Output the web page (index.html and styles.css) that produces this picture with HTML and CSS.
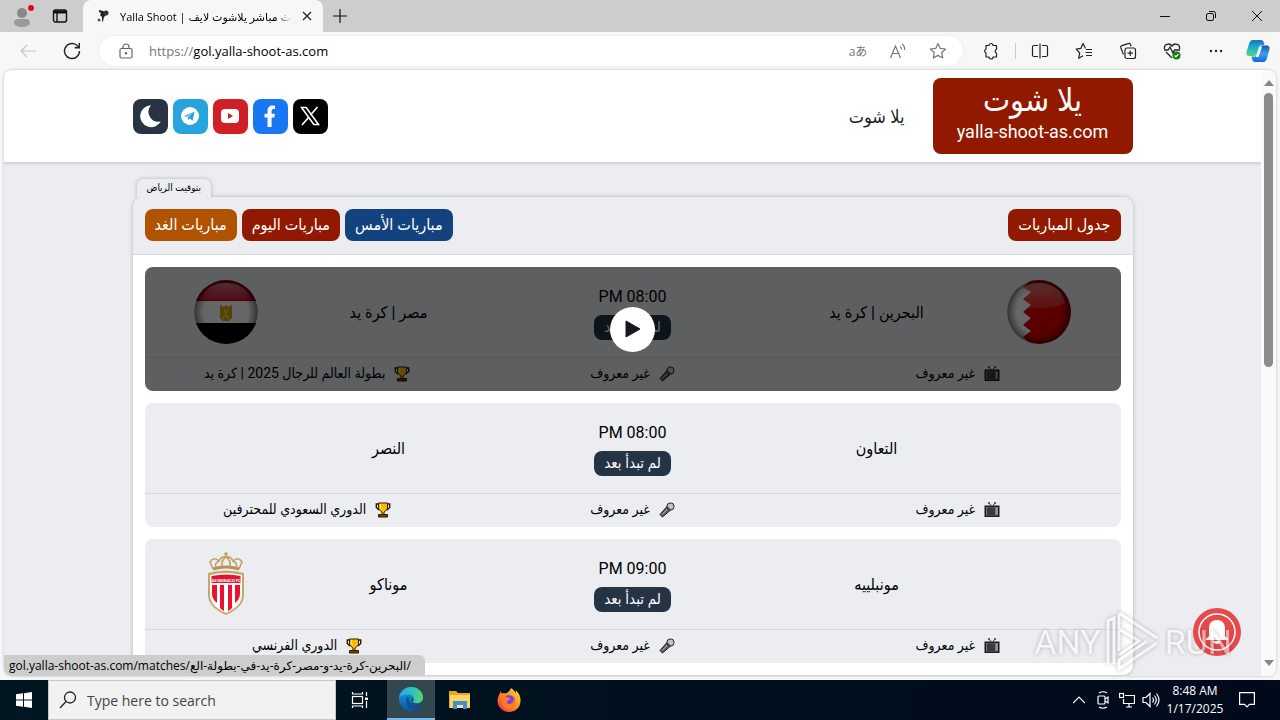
FILE: index.html
```
<!DOCTYPE html>
<html lang="ar">
<head>
    <meta charset="UTF-8">
    <meta name="viewport" content="width=device-width, initial-scale=1.0">
    <title>Yalla Shoot | بث مباشر يلاشوت لايف</title>
    <link rel="stylesheet" href="styles.css">
</head>
<body>
    <!-- Shared icons -->
    <svg class="sprite" aria-hidden="true">
        <symbol id="tv" viewBox="0 0 16 16">
            <path d="M4.500.5L7 3.500M11.500.5L9 3.500M4 1h2M10 1h2" stroke="#222" fill="none"/>
            <rect x=".5" y="3.500" width="15" height="11.500" fill="#1c1c1c"/>
            <rect x="2" y="5" width="12" height="8.500" fill="#777"/>
            <rect x="3" y="5.500" width="8" height="7.500" fill="#3a3a3a"/>
            <path d="M12 7h1.500M12 9h1.500M12 11h1.500" stroke="#ccc"/>
        </symbol>
        <symbol id="mic" viewBox="0 0 16 16">
            <path d="M8 4.500L1 12.500l2.500 2.500L11.500 8z" fill="#666" stroke="#111"/>
            <path d="M3 12.500L9.500 6" stroke="#aaa"/>
            <circle cx="11.500" cy="4.500" r="3.600" fill="#c4c4c4" stroke="#222"/>
            <path d="M8 4.500l3.500 3.500" stroke="#222"/>
        </symbol>
        <symbol id="cup" viewBox="0 0 16 16">
            <path d="M4 2H1.300v3.500L4 8M12 2h2.700v3.500L12 8" fill="none" stroke="#2b1c00" stroke-width="1.400"/>
            <path d="M3.500 1h9v5.500L10 9.500 9 10v2.500H7V10L6 9.500 3.500 6.500z" fill="#fdb900" stroke="#2b1c00"/>
            <path d="M5.500 2v4l1.500 2" fill="none" stroke="#ffe27a"/>
            <path d="M3.500 12.500h9v2.500h-9z" fill="#7a4300" stroke="#2b1c00"/>
        </symbol>
    </svg>

    <div class="titlebar">
        <button class="profile" aria-label="Profile">
            <svg width="24" height="24" viewBox="0 0 24 24"><circle cx="12" cy="9" r="5" fill="#888"/><path d="M4 19c0-3 2-4 4-4h8c2 0 4 1 4 4 0 2-4 4-8 4s-8-2-8-4z" fill="#999"/><circle cx="21" cy="4" r="3" fill="#e30b17"/></svg>
        </button>
        <button class="tab-actions" aria-label="Tab actions">
            <svg width="16" height="16" viewBox="0 0 16 16" fill="none" stroke="#111" stroke-width="1.400"><rect x="1.500" y="2" width="13" height="12" rx="2"/><path d="M1.500 4h13" stroke-width="3"/><path d="M5 4v10"/></svg>
        </button>
        <div class="tab">
            <svg width="14" height="16" viewBox="0 0 14 16"><path d="M3 2l4 1 2 1 2-1 1 3-2 1-2 2-1 4-1 1V9L4 7l1-2-2-1z" fill="#222"/><circle cx="10" cy="5" r="2.500" fill="#333"/><circle cx="3" cy="12" r="1.500" fill="#555"/></svg>
            <span class="tab-title">Yalla Shoot | بث مباشر يلاشوت لايف</span>
            <button class="tab-close" aria-label="Close tab"><svg width="10" height="10" viewBox="0 0 10 10" stroke="#222" stroke-width="1.300"><path d="M1 1l8 8M9 1L1 9"/></svg></button>
        </div>
        <button class="new-tab" aria-label="New tab"><svg width="14" height="14" viewBox="0 0 14 14" stroke="#111" stroke-width="1.200"><path d="M7 0v14M0 7h14"/></svg></button>
        <div class="window-buttons">
            <button aria-label="Minimize"><svg width="10" height="10" viewBox="0 0 10 10" stroke="#111"><path d="M0 5.500h10"/></svg></button>
            <button aria-label="Restore"><svg width="10" height="10" viewBox="0 0 10 10" fill="none" stroke="#111"><rect x=".5" y="2.500" width="7" height="7" rx="1.500"/><path d="M3 .5h4.500a2 2 0 0 1 2 2V7"/></svg></button>
            <button aria-label="Close"><svg width="10" height="10" viewBox="0 0 10 10" stroke="#111"><path d="M0 0l10 10M10 0L0 10"/></svg></button>
        </div>
    </div>

    <div class="toolbar">
        <button class="tool" aria-label="Back"><svg width="18" height="16" viewBox="0 0 18 16" fill="none" stroke="#c4c4c4" stroke-width="1.200"><path d="M17 8H2M8 2L2 8l6 6"/></svg></button>
        <button class="tool" aria-label="Refresh"><svg width="18" height="18" viewBox="0 0 18 18" fill="none" stroke="#222" stroke-width="1.400"><path d="M16.500 9A7.500 7.500 0 1 1 13.500 3L16 5.500M16.300 1v4.700h-4.700"/></svg></button>
        <div class="address">
            <svg width="14" height="16" viewBox="0 0 14 16" fill="none" stroke="#666" stroke-width="1.200"><rect x="1" y="5.500" width="12" height="9.500" rx="1.500"/><path d="M4 5.500V4a3 3 0 0 1 6 0v1.500"/><circle cx="7" cy="10.300" r=".7" fill="#666"/></svg>
            <label for="url">https://</label>
            <input id="url" type="text" value="gol.yalla-shoot-as.com">
            <button class="address-btn" aria-label="Translate"><span class="translate">aあ</span></button>
            <button class="address-btn" aria-label="Read aloud"><svg width="18" height="16" viewBox="0 0 18 16" fill="none" stroke="#777" stroke-width="1.200"><path d="M1.500 15L6.500 3l5 12M3.300 10.500h6.500M11 3.500q1.500 1 1.500 3M13 1q3 2 2.500 6"/></svg></button>
            <button class="address-btn" aria-label="Add to favorites"><svg width="18" height="18" viewBox="0 0 18 18" fill="none" stroke="#777" stroke-width="1.200" stroke-linejoin="round"><path d="M9 1.500l2.300 4.900 5.300.6-3.900 3.700 1 5.300L9 13.400 4.300 16l1-5.300L1.400 7l5.300-.6z"/></svg></button>
        </div>
        <button class="tool" aria-label="Extensions"><svg width="18" height="18" viewBox="0 0 18 18" fill="none" stroke="#222" stroke-width="1.200" stroke-linejoin="round"><path d="M4 3.500h3a2 2 0 0 1 4 0h3.500v4a1.800 1.800 0 0 0 0 3.500v4H11a2 2 0 0 1-4 0H4v-4a2 2 0 0 1 0-3.800z"/></svg></button>
        <span class="divider"></span>
        <button class="tool" aria-label="Split screen"><svg width="18" height="18" viewBox="0 0 18 18" fill="none" stroke="#222" stroke-width="1.200"><path d="M7 3.500H3A1.500 1.500 0 0 0 1.500 5v8A1.500 1.500 0 0 0 3 14.500h4M11 3.500h4A1.500 1.500 0 0 1 16.500 5v8a1.500 1.500 0 0 1-1.500 1.500h-4M9 1.500v15"/></svg></button>
        <button class="tool" aria-label="Favorites"><svg width="18" height="18" viewBox="0 0 18 18" fill="none" stroke="#222" stroke-width="1.200" stroke-linejoin="round"><path d="M10.500 6.500L8 1.500 5.800 6.400l-4.600.7L4.700 11l-1 5.300L8 13.800M11 7.500h6M10.500 10.500h6.500M11 13.500h6"/></svg></button>
        <button class="tool" aria-label="Collections"><svg width="18" height="18" viewBox="0 0 18 18" fill="none" stroke="#222" stroke-width="1.200"><rect x="6" y="6" width="10.500" height="10.500" rx="2"/><path d="M11.200 8.500v5.500M8.500 11.200H14M4.500 12.500L1.800 5.800q-.5-1.500 1-2.200l6.500-2q1.500-.5 2.200 1l.6 1.600"/></svg></button>
        <button class="tool" aria-label="Browser essentials"><svg width="18" height="18" viewBox="0 0 18 18" fill="none" stroke="#222" stroke-width="1.300"><path d="M1.500 7C.5 2 6.500.5 9 4c2.500-3.500 8.500-2 7.500 3M3 10l6 6M1 8h4l2-3 3 6 1.500-3H17"/><circle cx="13.500" cy="13.500" r="4" fill="#107c10" stroke="none"/><path d="M11.500 13.500l1.400 1.400 2.400-2.600" stroke="#fff"/></svg></button>
        <button class="tool" aria-label="Settings and more"><svg width="14" height="4" viewBox="0 0 14 4" fill="#222"><circle cx="2" cy="2" r="1.200"/><circle cx="7" cy="2" r="1.200"/><circle cx="12" cy="2" r="1.200"/></svg></button>
        <button class="tool copilot" aria-label="Copilot">
            <svg width="24" height="24" viewBox="0 0 24 24">
                <defs>
                    <linearGradient id="cpA" x1="0" y1="0" x2="0" y2="1"><stop offset="0" stop-color="#1a6fd0"/><stop offset=".5" stop-color="#1bb5c9"/><stop offset="1" stop-color="#4fd67e"/></linearGradient>
                    <linearGradient id="cpB" x1="0" y1="0" x2="0" y2="1"><stop offset="0" stop-color="#1556a8"/><stop offset=".5" stop-color="#3aa0f0"/><stop offset="1" stop-color="#1862d8"/></linearGradient>
                </defs>
                <path d="M7 1h8q2 0 2.700 2L18.500 6h-3q-2 0-2.600 2L11 15q-.7 2-2.600 2H3Q0 17 .5 13L3.300 4Q4.200 1 7 1z" fill="url(#cpA)"/>
                <path d="M17 23H9q-2 0-2.700-2L5.500 17.500h3q2 0 2.600-2L13 9q.7-2.500 2.600-2.500H21q3 0 2.500 4L20.700 20q-.9 3-3.700 3z" fill="url(#cpB)"/>
                <path d="M13.500 7.500h2.700L12.500 18H9.700z" fill="#f4faff"/>
            </svg>
        </button>
    </div>

    <div class="viewport">
        <div class="page" dir="rtl">
            <header class="site-header">
                <div class="container header-row">
                    <a class="logo" href="#"><span class="logo-name">يلا شوت</span><span class="logo-domain">yalla-shoot-as.com</span></a>
                    <nav><a href="#">يلا شوت</a></nav>
                    <div class="social">
                        <a class="social-link x" href="#" aria-label="X"><svg width="20" height="20" viewBox="0 0 20 20"><path d="M1.500 1.500h4.700L18.500 18.500h-4.700z" fill="none" stroke="#fff" stroke-width="1.600"/><path d="M17.500 1l-7 8M8.500 11.500L2 19" stroke="#fff" stroke-width="1.700"/></svg></a>
                        <a class="social-link facebook" href="#" aria-label="Facebook"><svg width="14" height="22" viewBox="0 0 14 22"><path d="M4.500 22V12.500H1.500V8.700h3V6.200C4.500 2.500 6.500.5 9.500.5c1.300 0 2.500.2 2.500.2v3.400h-1.500c-1.500 0-1.900.9-1.900 1.900v2.700h3.300l-.6 3.800H8.600V22z" fill="#fff"/></svg></a>
                        <a class="social-link youtube" href="#" aria-label="YouTube"><svg width="20" height="16" viewBox="0 0 20 16"><rect x="1" y="1" width="18" height="14" rx="4" fill="#fff"/><path d="M8 5l5 3-5 3z" fill="#d11f28"/></svg></a>
                        <a class="social-link telegram" href="#" aria-label="Telegram"><svg width="20" height="20" viewBox="0 0 20 20"><circle cx="10" cy="10" r="9" fill="#fff"/><path d="M4 10l10.500-4.300-1.900 9-3-2.200-1.600 1.500-.4-2.700 4.500-4-5.700 3.500z" fill="#27a3dd"/></svg></a>
                        <button class="social-link night" aria-label="الوضع الليلي"><svg width="24" height="24" viewBox="0 0 24 24"><path d="M13 1.200A11 11 0 1 0 22.800 17.500 10 10 0 0 1 13 1.200z" fill="#fff"/></svg></button>
                    </div>
                </div>
            </header>

            <main class="container">
                <div class="timezone">بتوقيت الرياض</div>
                <section class="panel">
                    <div class="panel-head">
                        <h1 class="pill red">جدول المباريات</h1>
                        <div class="days">
                            <a class="pill blue" href="#">مباريات الأمس</a>
                            <a class="pill red" href="#">مباريات اليوم</a>
                            <a class="pill orange" href="#">مباريات الغد</a>
                        </div>
                    </div>
                    <div class="matches">
                        <article class="match">
                            <div class="match-main">
                                <div class="crest">
                                    <svg width="64" height="64" viewBox="0 0 64 64">
                                        <defs>
                                            <clipPath id="ball"><circle cx="32" cy="32" r="32"/></clipPath>
                                            <radialGradient id="shade"><stop offset=".7" stop-color="#000" stop-opacity="0"/><stop offset="1" stop-color="#000" stop-opacity=".5"/></radialGradient>
                                            <linearGradient id="shine" x1="0" y1="0" x2="0" y2="1"><stop offset="0" stop-color="#fff" stop-opacity=".45"/><stop offset="1" stop-color="#fff" stop-opacity=".1"/></linearGradient>
                                        </defs>
                                        <g clip-path="url(#ball)">
                                            <path d="M0 0h64v64H0z" fill="#fff"/>
                                            <path d="M64 0H20l3 1-7 6 8 5-8 7 8 6-8 7 8 6-8 7 8 6-8 6 8 7h40z" fill="#e00000"/>
                                            <circle cx="32" cy="32" r="32" fill="url(#shade)"/>
                                            <path d="M6 32C6 8 20 3 32 3s24 7 26 20c-16 9-32 1-52 9z" fill="url(#shine)"/>
                                        </g>
                                    </svg>
                                </div>
                                <div class="team">البحرين | كرة يد</div>
                                <div class="kickoff"><time>08:00 PM</time><span class="status">لم تبدأ بعد</span></div>
                                <div class="team">مصر | كرة يد</div>
                                <div class="crest">
                                    <svg width="64" height="64" viewBox="0 0 64 64">
                                        <g clip-path="url(#ball)">
                                            <path d="M0 0h64v64H0z" fill="#fff"/>
                                            <path d="M0 0h64v21H0z" fill="#c4001e"/>
                                            <path d="M0 43h64v21H0z" fill="#000"/>
                                            <path d="M26 25l4 2 2-2 2 2 4-2v13l-3 3h-6l-3-3z" fill="#d9a800"/>
                                            <path d="M30 29l2 4 2-4M29 39l3-5 3 5" fill="none" stroke="#fff3b0"/>
                                            <circle cx="32" cy="32" r="32" fill="url(#shade)"/>
                                            <path d="M6 20C12 7 20 3 32 3s20 4 26 17z" fill="url(#shine)"/>
                                        </g>
                                    </svg>
                                </div>
                            </div>
                            <ul class="match-info">
                                <li><svg class="icon"><use href="#tv"/></svg>غير معروف</li>
                                <li><svg class="icon"><use href="#mic"/></svg>غير معروف</li>
                                <li><svg class="icon"><use href="#cup"/></svg>بطولة العالم للرجال 2025 | كرة يد</li>
                            </ul>
                            <a class="match-hover" href="#" aria-label="مشاهدة المباراة"><span class="play"><svg width="16" height="18" viewBox="0 0 16 18"><path d="M1 1l14 8-14 8z" fill="#16191d" stroke="#16191d" stroke-linejoin="round"/></svg></span></a>
                        </article>

                        <article class="match">
                            <div class="match-main">
                                <div class="crest"></div>
                                <div class="team">التعاون</div>
                                <div class="kickoff"><time>08:00 PM</time><span class="status">لم تبدأ بعد</span></div>
                                <div class="team">النصر</div>
                                <div class="crest"></div>
                            </div>
                            <ul class="match-info">
                                <li><svg class="icon"><use href="#tv"/></svg>غير معروف</li>
                                <li><svg class="icon"><use href="#mic"/></svg>غير معروف</li>
                                <li><svg class="icon"><use href="#cup"/></svg>الدوري السعودي للمحترفين</li>
                            </ul>
                        </article>

                        <article class="match">
                            <div class="match-main">
                                <div class="crest"></div>
                                <div class="team">مونبلييه</div>
                                <div class="kickoff"><time>09:00 PM</time><span class="status">لم تبدأ بعد</span></div>
                                <div class="team">موناكو</div>
                                <div class="crest">
                                    <svg width="40" height="64" viewBox="0 0 40 64">
                                        <path d="M2 21q18-5 36 0v22q0 12-18 20Q2 55 2 43z" fill="#c9a568"/>
                                        <path d="M4 23q16-4 32 0v20q0 11-16 18Q4 54 4 43z" fill="#fff"/>
                                        <path d="M5.500 24q14.500-3 29 0v7h-29z" fill="#e0152f"/>
                                        <path d="M6 33h5v18q-5-4-5-9zM14 33h4v26q-2-1-4-3zM22 33h4v23q-2 2-4 3zM29 33h5v9q0 5-5 9z" fill="#ee0f33"/>
                                        <text class="crest-text" x="20" y="30">AS MONACO FC</text>
                                        <path d="M7 17L4 10q4-6 9-1 2-5 7-4 5-1 7 4 5-5 9 1l-3 7M10 16q-2-5 3-7M30 16q2-5-3-7M16 15q-1-7 4-10 5 3 4 10M20 0v5M18 2h4" fill="none" stroke="#c3a066" stroke-width="1.600"/>
                                        <path d="M7 17q13-4 26 0" fill="none" stroke="#b99255" stroke-width="3"/>
                                    </svg>
                                </div>
                            </div>
                            <ul class="match-info">
                                <li><svg class="icon"><use href="#tv"/></svg>غير معروف</li>
                                <li><svg class="icon"><use href="#mic"/></svg>غير معروف</li>
                                <li><svg class="icon"><use href="#cup"/></svg>الدوري الفرنسي</li>
                            </ul>
                        </article>
                    </div>
                </section>
            </main>
        </div>

        <div class="scrollbar">
            <svg width="10" height="6" viewBox="0 0 10 6"><path d="M5 0l5 6H0z" fill="#888"/></svg>
            <div class="track"><div class="thumb"></div></div>
            <svg width="10" height="6" viewBox="0 0 10 6"><path d="M5 6l5-6H0z" fill="#888"/></svg>
        </div>

        <button class="bell" aria-label="Notifications"><svg width="48" height="48" viewBox="0 0 48 48"><circle cx="24" cy="24" r="24" fill="#e54b4d"/><circle cx="24" cy="24" r="18" fill="none" stroke="#fff" stroke-width="1.500"/><path d="M24 12c-6 0-8 4-8 9v7l-3 3v1h22v-1l-3-3v-7c0-5-2-9-8-9zM20 33h8q-1 3-4 3t-4-3z" fill="#fff"/></svg></button>
        <div class="status-bubble">gol.yalla-shoot-as.com/matches/البحرين-كرة-يد-و-مصر-كرة-يد-في-بطولة-الع/</div>
        <div class="watermark">
            <span>ANY</span>
            <svg width="56" height="64" viewBox="0 0 56 64" fill="none" stroke="#fff" stroke-width="3"><path d="M3 54V11l6-3v46M14 3l38 25M14 3v38M14 19l20 12-20 14M52 33L14 59v-9l28-19"/></svg>
            <span>RUN</span>
        </div>
    </div>

    <div class="taskbar">
        <button class="task" aria-label="Start"><svg width="16" height="16" viewBox="0 0 16 16" fill="#fff"><path d="M0 2.300l7-1v6.200H0zM8 1.200L16 0v7.500H8zM0 8.500h7v6.200l-7-1zM8 8.500h8V16l-8-1.200z"/></svg></button>
        <div class="search">
            <svg width="18" height="18" viewBox="0 0 18 18" fill="none" stroke="#222" stroke-width="1.300"><circle cx="11" cy="6.500" r="5.500"/><path d="M7 10.500L1 17"/></svg>
            <input type="search" placeholder="Type here to search" aria-label="Type here to search">
        </div>
        <button class="task" aria-label="Task view"><svg width="18" height="16" viewBox="0 0 18 16" fill="none" stroke="#fff" stroke-width="1.200"><rect x="1.500" y="4.500" width="10" height="7"/><path d="M1.500 0v2h10V0M1.500 16v-2h10v2M15.500 0v4M15.500 9v7"/><path d="M14 5.500h3v2.500h-3z" fill="#fff" stroke="none"/></svg></button>
        <div class="apps">
            <button class="task active" aria-label="Microsoft Edge">
                <svg width="24" height="24" viewBox="0 0 24 24">
                    <defs>
                        <linearGradient id="edgeA" x1="0" y1="0" x2="1" y2="0"><stop offset="0" stop-color="#2aa5e8"/><stop offset=".6" stop-color="#2fc4c0"/><stop offset="1" stop-color="#62d65a"/></linearGradient>
                        <linearGradient id="edgeB" x1="0" y1="0" x2="0" y2="1"><stop offset="0" stop-color="#1b9de2"/><stop offset="1" stop-color="#0c59a4"/></linearGradient>
                    </defs>
                    <circle cx="12" cy="12" r="12" fill="url(#edgeB)"/>
                    <path d="M0 11C1 4 6 0 12 0c7 0 12 5 12 10.500 0 4-3 6-6 6s-4.500-1-4-2.200c2-2.300.5-6.300-4-6.800C5 7 1 9 0 11z" fill="url(#edgeA)"/>
                    <path d="M9 9c-4 5-1 12 4.500 15C20 24 22 20 22.800 17.500 18 20.500 10 19 9 9z" fill="#114f96"/>
                    <path d="M14 14.300c-.5 1.200 1 2.200 4 2.200 2.500 0 4.500-1.500 5.500-3.500l1 3.500-1.700 1c-4 2.500-10 1-10.300-3.500-.2-2 1-3 1.500-3 .8 1.200.8 2.200 0 3.300z" fill="#33474f"/>
                </svg>
            </button>
            <button class="task" aria-label="File Explorer"><svg width="22" height="20" viewBox="0 0 22 20"><path d="M0 1h7l2 2h12v15H0z" fill="#e9a820"/><path d="M1 5h20v13H1z" fill="#fdd563"/><path d="M4 11h14v8h-4v-4H8v4H4z" fill="#3d91d1"/><path d="M8 15h6v3H8z" fill="#f5e1a0"/></svg></button>
            <button class="task" aria-label="Firefox">
                <svg width="24" height="24" viewBox="0 0 24 24">
                    <defs><linearGradient id="ff" x1="1" y1="0" x2="0" y2="1"><stop offset="0" stop-color="#ffe23d"/><stop offset=".5" stop-color="#ff8a1f"/><stop offset="1" stop-color="#f4225a"/></linearGradient></defs>
                    <path d="M14 0c3 2 4 4 5 5 0-1 0-2-.5-3C22 5 24 9 23.500 13.500 23 20 18 24 12 24S.5 19 .5 13C.5 9 2 7 3 5l1-2c0 1 .5 2 1 2.500C6 5 8 5 9 5.500 11 4 13 3 14 0z" fill="url(#ff)"/>
                    <circle cx="12" cy="13" r="6" fill="#7b3fe0"/>
                    <path d="M5 9c3-2 5 0 7 1 2 0 1 2-1 2.500-2 1-1 3 1 3.500 3 0 5-2 4-6 4 5 1 11-5 11S4 15 5 9z" fill="#ff7a2a"/>
                </svg>
            </button>
        </div>
        <div class="tray">
            <button aria-label="Show hidden icons"><svg width="12" height="8" viewBox="0 0 12 8" fill="none" stroke="#fff" stroke-width="1.200"><path d="M0 7l6-6 6 6"/></svg></button>
            <button aria-label="Meet now"><svg width="14" height="18" viewBox="0 0 14 18" fill="none" stroke="#fff" stroke-width="1.200"><rect x="2" y="5" width="7" height="8" rx="1"/><path d="M9 8l3-2v6l-3-2M3 2q4-2.500 8 0M3 16q4 2.500 8 0"/></svg></button>
            <button aria-label="Network"><svg width="16" height="16" viewBox="0 0 16 16" fill="none" stroke="#fff" stroke-width="1.200"><path d="M6 3.500h9.500v8H4.500V7M7 15h6M10 11.500V15"/><rect x=".5" y="1.500" width="4" height="4"/></svg></button>
            <button aria-label="Volume"><svg width="18" height="16" viewBox="0 0 18 16" fill="none" stroke="#fff" stroke-width="1.200"><path d="M1 5.500h3l4-4v13l-4-4H1zM10.500 5.500q2 2.500 0 5M12.500 3.500q3.500 4.500 0 9M14.500 1.500q5 6.500 0 13"/></svg></button>
            <div class="clock"><span>8:48 AM</span><span>1/17/2025</span></div>
            <button class="action-center" aria-label="Notifications"><svg width="16" height="16" viewBox="0 0 16 16" fill="none" stroke="#fff" stroke-width="1.200"><path d="M.6.600h14.800v11.800h-4.900L8 15l-2.500-2.600H.6z"/></svg></button>
        </div>
    </div>
</body>
</html>
```

FILE: styles.css
```
:root {
    --page-bg: #ebedf0;
    --chrome: #f7f7f7;
    --titlebar: #cdcdcd;
    --red: #911900;
    --blue: #12437f;
    --orange: #b05200;
    --dark: #253445;
    --line: #d6d9dd;
    --radius: 8px;
    --ui-font: "Open Sans", "Noto Sans", "DejaVu Sans", sans-serif;
    --page-font: "Roboto", "DejaVu Sans Condensed", "DejaVu Sans", sans-serif;
}

* {
    margin: 0;
    padding: 0;
    box-sizing: border-box;
}

body {
    display: flex;
    flex-direction: column;
    height: 100vh;
    overflow: hidden;
    background: var(--chrome);
    color: #000;
    font-family: var(--ui-font);
    font-size: 12px;
}

button {
    display: flex;
    align-items: center;
    justify-content: center;
    border: none;
    background: none;
    cursor: pointer;
}

svg {
    display: block;
    flex: none;
}

input {
    border: none;
    outline: none;
    background: none;
    font-family: inherit;
    min-width: 0;
}

a {
    color: inherit;
    text-decoration: none;
}

.sprite {
    position: absolute;
    width: 0;
    height: 0;
}

/* Browser chrome */
.titlebar {
    display: flex;
    height: 32px;
    background: var(--titlebar);
}

.profile {
    width: 44px;
}

.tab-actions {
    width: 32px;
}

.tab {
    display: flex;
    align-items: center;
    gap: 10px;
    width: 240px;
    margin-left: 7px;
    padding: 0 10px 0 13px;
    border-radius: 8px 8px 0 0;
    background: var(--chrome);
}

.tab-title {
    flex: 1;
    overflow: hidden;
    font-size: 11px;
    white-space: nowrap;
    mask-image: linear-gradient(to right, #000 92%, transparent);
}

.tab-close {
    width: 12px;
    height: 20px;
}

.new-tab {
    width: 34px;
}

.window-buttons {
    display: flex;
    margin-left: auto;
}

.window-buttons button {
    width: 46px;
}

.toolbar {
    display: flex;
    align-items: center;
    height: 38px;
    padding: 0 2px 0 6px;
}

.tool {
    width: 44px;
    height: 32px;
}

.copilot {
    width: 40px;
}

.divider {
    width: 1px;
    height: 16px;
    margin: 0 2px;
    background: #ccc;
}

.address {
    display: flex;
    flex: 1;
    align-items: center;
    height: 30px;
    margin: 0 6px 0 5px;
    padding: 0 5px 0 20px;
    border-radius: 15px;
    background: #fff;
    box-shadow: 0 0 2px rgba(0, 0, 0, 0.1);
    font-size: 13px;
}

.address label {
    margin-left: 16px;
    color: #777;
}

.address input {
    flex: 1;
    font-size: 13px;
}

.address-btn {
    width: 40px;
    height: 30px;
}

.translate {
    color: #777;
    font-family: "Open Sans", "Noto Sans CJK JP", sans-serif;
    font-size: 12px;
}

/* Viewport */
.viewport {
    position: relative;
    display: flex;
    flex: 1;
    min-height: 0;
    margin: 0 4px 4px;
    border-radius: 8px;
    background: #fff;
    box-shadow: 0 0 3px rgba(0, 0, 0, 0.25);
    overflow: hidden;
}

.page {
    flex: 1;
    overflow: hidden;
    background: var(--page-bg);
    font-family: var(--page-font);
    font-size: 16px;
}

.container {
    width: 100%;
    max-width: 1000px;
    margin: 0 auto;
}

.site-header {
    padding: 8px 0;
    background: #fff;
    box-shadow: 0 1px 3px rgba(0, 0, 0, 0.2);
}

.header-row {
    display: flex;
    align-items: center;
}

.logo {
    display: flex;
    flex-direction: column;
    align-items: center;
    width: 200px;
    height: 76px;
    border-radius: var(--radius);
    background: var(--red);
    color: #fff;
}

.logo-name {
    font-size: 32px;
    line-height: 44px;
}

.logo-domain {
    font-size: 18px;
    line-height: 20px;
}

nav {
    margin-inline-start: 28px;
    color: #222;
    font-size: 18px;
}

.social {
    display: flex;
    gap: 5px;
    margin-inline-start: auto;
}

.social-link {
    display: flex;
    align-items: center;
    justify-content: center;
    width: 35px;
    height: 35px;
    border-radius: var(--radius);
}

.x { background: #000; }
.facebook { background: #1877f2; }
.youtube { background: #d11f28; }
.telegram { background: #27a3dd; }
.night { background: #283343; }

/* Match table */
.timezone {
    position: relative;
    z-index: 1;
    width: fit-content;
    margin: 17px auto 0 4px;
    padding: 0 10px;
    border-radius: 6px 6px 0 0;
    background: var(--page-bg);
    box-shadow: 0 0 4px rgba(0, 0, 0, 0.25);
    clip-path: inset(-4px -4px 0 -4px);
    font-size: 10px;
    font-weight: 500;
    line-height: 18px;
}

.panel {
    border-radius: 10px;
    background: #fff;
    box-shadow: 0 0 4px rgba(0, 0, 0, 0.25);
}

.panel-head {
    display: flex;
    align-items: center;
    justify-content: space-between;
    padding: 12px 12px 13px;
    border-bottom: 1px solid var(--line);
    border-radius: 10px 10px 0 0;
    background: var(--page-bg);
}

.days {
    display: flex;
    gap: 5px;
}

.pill {
    padding: 0 10px;
    border-radius: var(--radius);
    color: #fff;
    font-size: 16px;
    font-weight: 400;
    line-height: 32px;
}

.red { background: var(--red); }
.blue { background: var(--blue); }
.orange { background: var(--orange); }

.matches {
    display: flex;
    flex-direction: column;
    gap: 12px;
    padding: 12px;
}

.match {
    position: relative;
    border-radius: var(--radius);
    background: var(--page-bg);
    overflow: hidden;
}

.match-main {
    display: grid;
    grid-template-columns: 1fr 1fr 2fr 1fr 1fr;
    align-items: center;
    justify-items: center;
    height: 90px;
}

.kickoff {
    display: flex;
    flex-direction: column;
    align-items: center;
    gap: 8px;
    padding-top: 2px;
    line-height: 20px;
}

.status {
    padding: 0 10px;
    border-radius: var(--radius);
    background: var(--dark);
    color: #fff;
    font-size: 15px;
    line-height: 25px;
}

.crest-text {
    fill: #fff;
    font-size: 4px;
    font-weight: 700;
    text-anchor: middle;
    direction: ltr;
}

.match-info {
    display: grid;
    grid-template-columns: repeat(3, 1fr);
    padding-bottom: 2px;
    border-top: 1px solid var(--line);
    font-size: 14px;
    line-height: 31px;
    list-style: none;
}

.match-info li {
    display: flex;
    align-items: center;
    justify-content: center;
    gap: 9px;
}

.icon {
    width: 16px;
    height: 16px;
}

.match-hover {
    position: absolute;
    inset: 0;
    display: flex;
    align-items: center;
    justify-content: center;
    background: rgba(0, 0, 0, 0.6);
}

.play {
    display: flex;
    align-items: center;
    justify-content: center;
    width: 45px;
    height: 45px;
    border-radius: 50%;
    background: #fff;
}

.scrollbar {
    display: flex;
    flex-direction: column;
    align-items: center;
    width: 15px;
    padding: 10px 0;
    background: #fafafa;
}

.track {
    flex: 1;
    width: 9px;
    padding: 7px 0;
}

.thumb {
    height: 49%;
    border-radius: 5px;
    background: #8b8b8b;
}

.bell {
    position: absolute;
    right: 35px;
    bottom: 20px;
}

.status-bubble {
    position: absolute;
    left: 0;
    bottom: 0;
    padding: 0 14px 0 5px;
    border-radius: 0 6px 0 0;
    background: #cdcdcd;
    line-height: 21px;
}

.watermark {
    position: absolute;
    right: 44px;
    bottom: 2px;
    display: flex;
    align-items: center;
    gap: 4px;
    color: #fff;
    font-family: "Liberation Sans Narrow", "Roboto", sans-serif;
    font-size: 34px;
    filter: drop-shadow(0 0 2px rgba(0, 0, 0, 0.5));
    opacity: 0.5;
    pointer-events: none;
}

/* Taskbar */
.taskbar {
    display: flex;
    height: 40px;
    background: linear-gradient(to right, #001620, #010a1c);
    color: #fff;
}

.task {
    width: 48px;
}

.apps {
    display: flex;
    gap: 1px;
    margin-left: 3px;
}

.active {
    border-bottom: 2px solid #76b9ed;
    background: #33474f;
}

.search {
    display: flex;
    align-items: center;
    gap: 10px;
    width: 288px;
    padding: 0 10px;
    border: 1px solid #c8c8c8;
    background: #f2f2f2;
}

.search input {
    flex: 1;
    font-size: 14px;
}

.search input::placeholder {
    color: #444;
}

.tray {
    display: flex;
    margin-left: auto;
    padding-right: 9px;
}

.tray button {
    width: 24px;
}

.clock {
    display: flex;
    flex-direction: column;
    align-items: center;
    justify-content: center;
    width: 56px;
    margin-left: 4px;
    line-height: 18px;
}

.tray .action-center {
    width: 48px;
}
```
